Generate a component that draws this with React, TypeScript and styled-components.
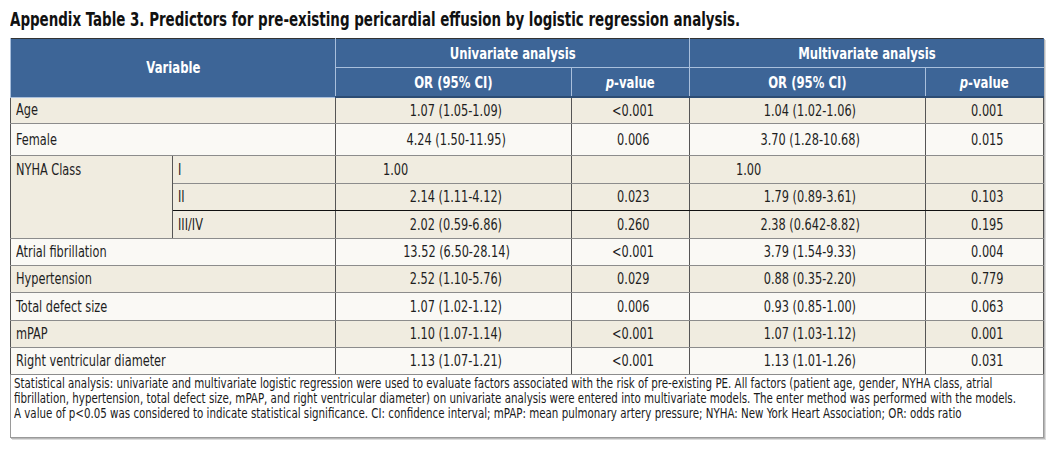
import React, { FC } from "react";
import styled, { createGlobalStyle } from "styled-components";

const GlobalStyle = createGlobalStyle`
  html, body {
    margin: 0;
    padding: 0;
    background: #ffffff;
    overflow: hidden;
  }
  body {
    font-family: "DejaVu Sans Condensed", "DejaVu Sans", "Liberation Sans", sans-serif;
    color: #1e1e1e;
  }
`;

// the print face is a narrow grotesque; squeeze the condensed face to match
const Squeeze = styled.span<{ $sx?: number; $origin?: string }>`
  display: inline-block;
  white-space: nowrap;
  transform: scaleX(${(p) => p.$sx ?? 0.84});
  transform-origin: ${(p) => p.$origin ?? "left"} center;
`;

const Page = styled.div`
  width: 1063px;
  height: 454px;
  padding: 9px 0 0 10px;
  box-sizing: border-box;
  overflow: hidden;
`;

const Title = styled.h1`
  margin: 0 0 9px;
  font-size: 19px;
  font-weight: bold;
  line-height: 20px;
  color: #111;
`;

const Frame = styled.div`
  width: 1034px;
  box-shadow: 1px 1px 0 #b8b8b8, 2px 2px 0 #dcdcdc;
`;

const Table = styled.table`
  width: 100%;
  border-collapse: collapse;
  table-layout: fixed;
  font-size: 15px;
  border-left: 1px solid #444;
  border-top: 1px solid #333;
`;

const HeadCell = styled.th`
  background: #3d6597;
  color: #fff;
  font-weight: bold;
  font-size: 16px;
  height: 28px;
  padding: 0;
  border: 1px solid #a9bfdc;
  border-top: none;
  text-align: center;
  &:last-child {
    border-right: 1px solid #3d6597;
  }
`;

const HeadRow = styled.tr`
  &:last-child th {
    border-bottom: 2px solid #2c4c74;
  }
`;

const Row = styled.tr<{ $alt?: boolean }>`
  background: ${(p) => (p.$alt ? "#faf9f5" : "#f0ece0")};
`;

const Cell = styled.td<{ $h?: number; $center?: boolean; $strong?: boolean; $indent?: number }>`
  height: ${(p) => p.$h ?? 26}px;
  padding: 0 0 0 ${(p) => p.$indent ?? 5}px;
  text-align: ${(p) => (p.$center ? "center" : "left")};
  vertical-align: middle;
  border-left: 1px solid #555;
  border-right: 1px solid #555;
  border-bottom: 1px solid ${(p) => (p.$strong ? "#111" : "#8c8c8c")};
  white-space: nowrap;
`;

const TopCell = styled(Cell)`
  vertical-align: top;
  padding-top: 5px;
`;

const Note = styled.div`
  background: #fff;
  border: 1px solid #9a9a9a;
  border-top: none;
  padding: 1px 3px 16px;
  font-size: 14.5px;
  line-height: 15px;
  color: #1a1a1a;
  overflow: hidden;
`;

const NoteLine = styled.div`
  white-space: nowrap;
`;

const Italic = styled.i`
  font-style: italic;
`;

type Line = { name: string; u: string; up: string; m: string; mp: string; alt?: boolean; h?: number };

const rows: Line[] = [
  { name: "Age", u: "1.07 (1.05-1.09)", up: "<0.001", m: "1.04 (1.02-1.06)", mp: "0.001", h: 25 },
  { name: "Female", u: "4.24 (1.50-11.95)", up: "0.006", m: "3.70 (1.28-10.68)", mp: "0.015", alt: true, h: 31 },
];

const nyha = [
  { cls: "I", u: "1.00", up: "", m: "1.00", mp: "", h: 27 },
  { cls: "II", u: "2.14 (1.11-4.12)", up: "0.023", m: "1.79 (0.89-3.61)", mp: "0.103", h: 26 },
  { cls: "III/IV", u: "2.02 (0.59-6.86)", up: "0.260", m: "2.38 (0.642-8.82)", mp: "0.195", h: 27 },
];

const rest: Line[] = [
  { name: "Atrial fibrillation", u: "13.52 (6.50-28.14)", up: "<0.001", m: "3.79 (1.54-9.33)", mp: "0.004", alt: true },
  { name: "Hypertension", u: "2.52 (1.10-5.76)", up: "0.029", m: "0.88 (0.35-2.20)", mp: "0.779" },
  { name: "Total defect size", u: "1.07 (1.02-1.12)", up: "0.006", m: "0.93 (0.85-1.00)", mp: "0.063", alt: true, h: 27 },
  { name: "mPAP", u: "1.10 (1.07-1.14)", up: "<0.001", m: "1.07 (1.03-1.12)", mp: "0.001" },
  { name: "Right ventricular diameter", u: "1.13 (1.07-1.21)", up: "<0.001", m: "1.13 (1.01-1.26)", mp: "0.031", alt: true },
];

const note = [
  "Statistical analysis: univariate and multivariate logistic regression were used to evaluate factors associated with the risk of pre-existing PE. All factors (patient age, gender, NYHA class, atrial",
  "fibrillation, hypertension, total defect size, mPAP, and right ventricular diameter) on univariate analysis were entered into multivariate models. The enter method was performed with the models.",
  "A value of p<0.05 was considered to indicate statistical significance. CI: confidence interval; mPAP: mean pulmonary artery pressure; NYHA: New York Heart Association; OR: odds ratio",
];

const C: FC<{ children: React.ReactNode }> = ({ children }) => (
  <Squeeze $origin="center">{children}</Squeeze>
);

const H: FC<{ children: React.ReactNode }> = ({ children }) => (
  <Squeeze $sx={0.81} $origin="center">{children}</Squeeze>
);

const PlainRow: FC<{ r: Line }> = ({ r }) => (
  <Row $alt={r.alt}>
    <Cell colSpan={2} $h={r.h}><Squeeze>{r.name}</Squeeze></Cell>
    <Cell $center $h={r.h}><C>{r.u}</C></Cell>
    <Cell $center $h={r.h}><C>{r.up}</C></Cell>
    <Cell $center $h={r.h}><C>{r.m}</C></Cell>
    <Cell $center $h={r.h}><C>{r.mp}</C></Cell>
  </Row>
);

const App: FC = () => {
  return (
    <Page>
      <GlobalStyle />
      <Title>
        <Squeeze $sx={0.785}>Appendix Table 3. Predictors for pre-existing pericardial effusion by logistic regression analysis.</Squeeze>
      </Title>
      <Frame>
        <Table>
          <colgroup>
            <col style={{ width: 162 }} />
            <col style={{ width: 163 }} />
            <col style={{ width: 236 }} />
            <col style={{ width: 118 }} />
            <col style={{ width: 236 }} />
            <col style={{ width: 118 }} />
          </colgroup>
          <thead>
            <HeadRow>
              <HeadCell colSpan={2} rowSpan={2}><H>Variable</H></HeadCell>
              <HeadCell colSpan={2}><H>Univariate analysis</H></HeadCell>
              <HeadCell colSpan={2}><H>Multivariate analysis</H></HeadCell>
            </HeadRow>
            <HeadRow>
              <HeadCell><H>OR (95% CI)</H></HeadCell>
              <HeadCell><H><Italic>p</Italic>-value</H></HeadCell>
              <HeadCell><H>OR (95% CI)</H></HeadCell>
              <HeadCell><H><Italic>p</Italic>-value</H></HeadCell>
            </HeadRow>
          </thead>
          <tbody>
            {rows.map((r) => (
              <PlainRow key={r.name} r={r} />
            ))}
            {nyha.map((n, i) => (
              <Row key={n.cls}>
                {i === 0 && (
                  <TopCell rowSpan={3}><Squeeze>NYHA Class</Squeeze></TopCell>
                )}
                <Cell $h={n.h} $strong={i === 1}><Squeeze>{n.cls}</Squeeze></Cell>
                {n.up ? (
                  <Cell $h={n.h} $strong={i === 1} $center><C>{n.u}</C></Cell>
                ) : (
                  <Cell $h={n.h} $indent={47}><Squeeze>{n.u}</Squeeze></Cell>
                )}
                <Cell $h={n.h} $strong={i === 1} $center><C>{n.up}</C></Cell>
                {n.mp ? (
                  <Cell $h={n.h} $strong={i === 1} $center><C>{n.m}</C></Cell>
                ) : (
                  <Cell $h={n.h} $indent={46}><Squeeze>{n.m}</Squeeze></Cell>
                )}
                <Cell $h={n.h} $strong={i === 1} $center><C>{n.mp}</C></Cell>
              </Row>
            ))}
            {rest.map((r) => (
              <PlainRow key={r.name} r={r} />
            ))}
          </tbody>
        </Table>
        <Note>
          {note.map((t) => (
            <NoteLine key={t.slice(0, 12)}>
              <Squeeze $sx={0.788}>{t}</Squeeze>
            </NoteLine>
          ))}
        </Note>
      </Frame>
    </Page>
  );
};

export default App;
